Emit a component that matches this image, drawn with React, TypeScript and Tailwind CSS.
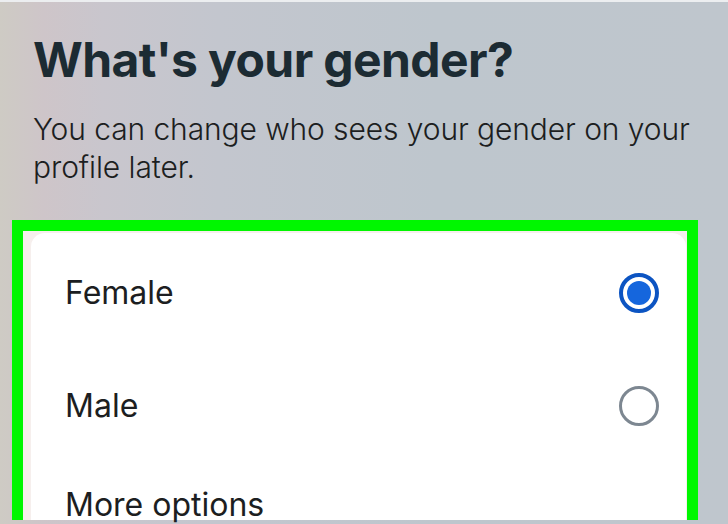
const OPTIONS = [
  { label: 'Female', selected: true, h: 'h-[113px]' },
  { label: 'Male', selected: false, h: 'h-[113px]' },
  { label: 'More options', selected: null, h: 'h-[86px]' },
];

function Radio({ selected }: { selected: boolean }) {
  if (selected) {
    return (
      <div className="w-10 h-10 rounded-full border-[4px] border-[#0c54c2] flex items-center justify-center">
        <div className="w-[24px] h-[24px] rounded-full bg-[#1566dd]" />
      </div>
    );
  }
  return <div className="w-10 h-10 rounded-full border-[3px] border-[#7d8791]" />;
}

export default function App() {
  return (
    <div
      className="w-[728px] h-[524px] overflow-hidden border-t-2 border-[#eceef0] bg-[linear-gradient(to_right,#cecbc4_0%,#cec5c9_6%,#c9c6cd_14%,#c3c6ce_30%,#bec6cd_60%,#bfc6cd_100%)]"
      style={{ fontFamily: 'Inter, "Noto Sans", sans-serif' }}
    >
      <div className="pl-[33px] pt-[30px]">
        <h1 className="text-[48px] leading-[56px] font-bold text-[#1c2b33] tracking-[-0.6px]">
          What's your gender?
        </h1>
        <p className="mt-[22px] text-[30px] leading-[38px] font-light text-[#1c1e21] tracking-[-0.1px]">
          You can change who sees your gender on your profile later.
        </p>
      </div>

      <div className="ml-3 mt-[34px] w-[686px] border-[11px] border-b-0 border-[#00f700] bg-[#f6efed] pl-2 pt-[2px] pr-[1px] h-[300px]">
        <div className="bg-white rounded-t-[14px] h-full pt-[3px] pl-[34px] pr-[27px]">
          {OPTIONS.map((o) => (
            <div key={o.label} className={`${o.h} flex items-center justify-between`}>
              <span className="text-[32px] text-[#1c1e21]">{o.label}</span>
              {o.selected !== null && <Radio selected={o.selected} />}
            </div>
          ))}
        </div>
      </div>
    </div>
  );
}
